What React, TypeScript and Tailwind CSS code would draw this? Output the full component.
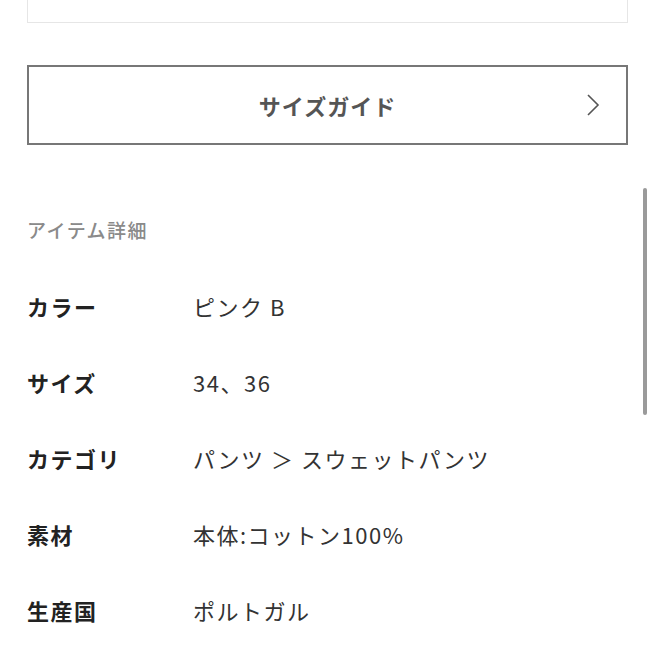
const font = { fontFamily: '"Noto Sans CJK JP", "Noto Sans", sans-serif' };

const details = [
  { label: 'カラー', value: 'ピンク B' },
  { label: 'サイズ', value: '34、36' },
  { label: 'カテゴリ', value: 'パンツ ＞ スウェットパンツ' },
  { label: '素材', value: '本体:コットン100%' },
  { label: '生産国', value: 'ポルトガル' },
];

export default function App() {
  return (
    <div className="relative h-[655px] w-[655px] overflow-hidden bg-white" style={font}>
      <div className="px-[27px]">
        <div className="h-[23px] border-x border-b border-[#e6e6e6]" />

        <button className="relative mt-[42px] flex h-[80px] w-full items-center justify-center border-2 border-[#777]">
          <span className="text-[22px] font-bold tracking-[1px] text-[#555]">サイズガイド</span>
          <svg
            className="absolute right-[26px] top-1/2 -translate-y-1/2"
            width="14"
            height="24"
            viewBox="0 0 14 24"
            fill="none"
            stroke="#555"
            strokeWidth="1.6"
          >
            <path d="M2 2 L12 12 L2 22" />
          </svg>
        </button>

        <h3 className="mt-[75px] text-[19px] font-medium leading-none tracking-[1.5px] text-[#8a8a8a]">アイテム詳細</h3>

        <dl className="mt-[56px] flex flex-col gap-[54px]">
          {details.map((d) => (
            <div key={d.label} className="flex items-center leading-none">
              <dt className="w-[166px] text-[22px] font-bold tracking-[1.5px] text-[#222]">{d.label}</dt>
              <dd className="text-[22px] tracking-[1.5px] text-[#333]">{d.value}</dd>
            </div>
          ))}
        </dl>
      </div>

      <div className="absolute right-[8px] top-[188px] h-[227px] w-[4px] rounded-full bg-[#9a9a9a]" />
    </div>
  );
}
